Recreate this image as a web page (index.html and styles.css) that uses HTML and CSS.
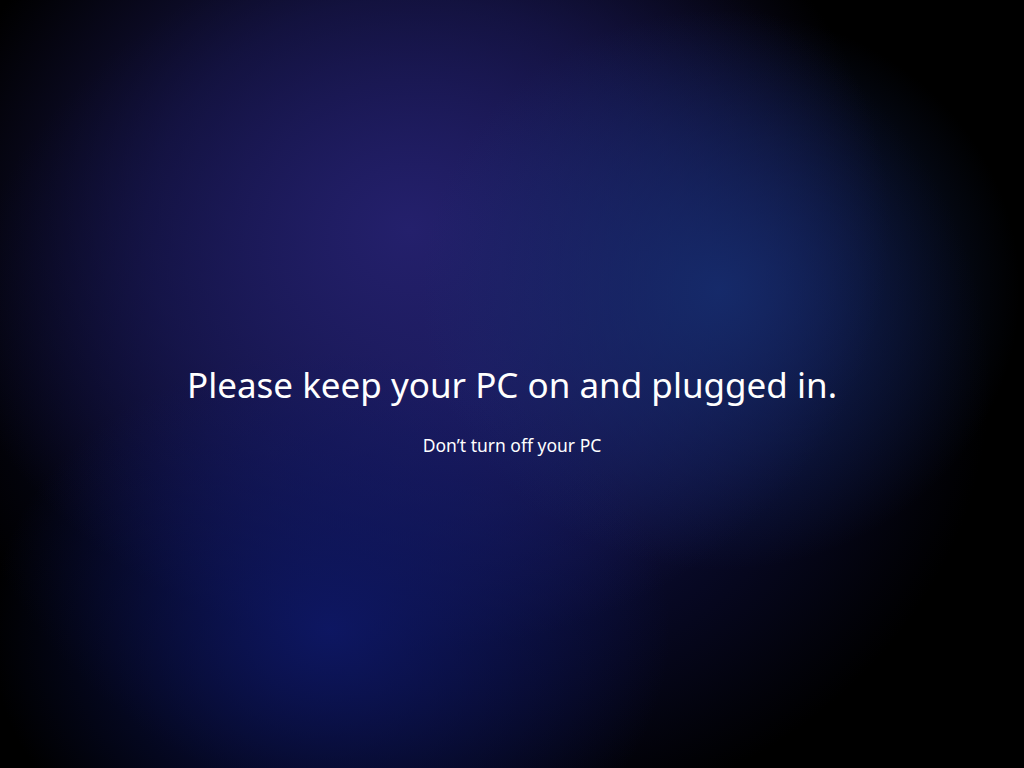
FILE: index.html
```html
<!DOCTYPE html>
<html lang="en">
<head>
<meta charset="utf-8">
<title>Updating</title>
<link rel="stylesheet" href="styles.css">
</head>
<body>
<main class="screen">
  <h1 class="title">Please keep your PC on and plugged in.</h1>
  <p class="subtitle">Don’t turn off your PC</p>
</main>
</body>
</html>
```
FILE: styles.css
```css
html, body {
  margin: 0;
  padding: 0;
  height: 100%;
}
body {
  background: #000;
  font-family: "Noto Sans", "Open Sans", sans-serif;
  color: #fff;
  overflow: hidden;
}
.screen {
  box-sizing: border-box;
  width: 1024px;
  height: 768px;
  padding-top: 51px;
  display: flex;
  flex-direction: column;
  align-items: center;
  justify-content: center;
  background:
    radial-gradient(ellipse 300px 280px at 720px 290px, rgba(22, 46, 112, 0.85), rgba(22, 46, 112, 0) 100%),
    radial-gradient(ellipse 340px 280px at 330px 630px, rgba(14, 24, 104, 0.9), rgba(14, 24, 104, 0) 100%),
    radial-gradient(ellipse 480px 420px at 410px 230px, rgba(36, 32, 108, 1), rgba(30, 28, 96, 0.6) 55%, rgba(20, 20, 70, 0) 100%),
    radial-gradient(ellipse 520px 450px at 470px 380px, rgba(20, 24, 90, 1), rgba(12, 14, 60, 0.55) 65%, rgba(0, 0, 0, 0) 100%),
    #000;
}
.title {
  margin: 0;
  font-size: 35px;
  font-weight: 400;
  line-height: 44px;
  letter-spacing: 0;
}
.subtitle {
  margin: 27px 0 0;
  font-size: 17.5px;
  font-weight: 400;
  line-height: 22px;
}
```
